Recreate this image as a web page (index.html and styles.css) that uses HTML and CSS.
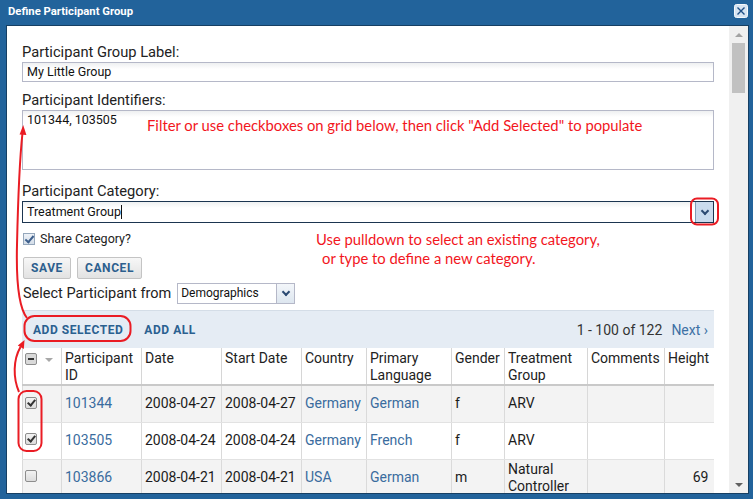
FILE: index.html
```html
<!DOCTYPE html>
<html lang="en">
<head>
    <meta charset="UTF-8">
    <title>Define Participant Group</title>
    <link rel="stylesheet" href="styles.css">
</head>
<body>
    <div class="window">
        <div class="titlebar">
            <span class="title">Define Participant Group</span>
            <svg class="close" width="14" height="14" viewBox="0 0 14 14">
                <rect x="0.5" y="0.5" width="13" height="13" rx="2" fill="#d6e4f2" stroke="#f4f8fc"/>
                <path d="M3.5 3.5 L10.5 10.5 M10.5 3.5 L3.5 10.5" stroke="#1d4f86" stroke-width="1.4"/>
            </svg>
        </div>

        <div class="body">
            <div class="pane">
                <div class="field-label">Participant Group Label:</div>
                <div class="text-input">My Little Group</div>

                <div class="field-label">Participant Identifiers:</div>
                <div class="text-area">101344, 103505</div>

                <div class="field-label">Participant Category:</div>
                <div class="combo focused">
                    <span class="combo-text">Treatment Group<span class="caret"></span></span>
                    <span class="trigger blue"><span class="chevron"></span></span>
                </div>

                <div class="check-row">
                    <span class="ext-check"></span>
                    <span>Share Category?</span>
                </div>

                <div class="buttons">
                    <span class="btn">SAVE</span>
                    <span class="btn">CANCEL</span>
                </div>

                <div class="select-row">
                    <span>Select Participant from</span>
                    <div class="combo small">
                        <span class="combo-text">Demographics</span>
                        <span class="trigger"><span class="chevron"></span></span>
                    </div>
                </div>

                <div class="grid-toolbar">
                    <span class="tool-link">ADD SELECTED</span>
                    <span class="tool-link">ADD ALL</span>
                    <span class="spacer"></span>
                    <span class="paging">1 - 100 of 122</span>
                    <span class="next">Next &rsaquo;</span>
                </div>

                <table class="grid">
                    <colgroup>
                        <col style="width:39px"><col style="width:80px"><col style="width:80px">
                        <col style="width:80px"><col style="width:65px"><col style="width:85px">
                        <col style="width:53px"><col style="width:83px"><col style="width:77px">
                        <col style="width:49px">
                    </colgroup>
                    <thead>
                        <tr>
                            <th class="sel-col"><span class="cb minus"></span><span class="sort"></span></th>
                            <th>Participant ID</th>
                            <th>Date</th>
                            <th>Start Date</th>
                            <th>Country</th>
                            <th>Primary Language</th>
                            <th>Gender</th>
                            <th>Treatment Group</th>
                            <th>Comments</th>
                            <th>Height</th>
                        </tr>
                    </thead>
                    <tbody>
                        <tr class="alt">
                            <td class="sel-col"><span class="cb checked"></span></td>
                            <td><a>101344</a></td>
                            <td>2008-04-27</td>
                            <td>2008-04-27</td>
                            <td><a>Germany</a></td>
                            <td><a>German</a></td>
                            <td>f</td>
                            <td>ARV</td>
                            <td></td>
                            <td class="num"></td>
                        </tr>
                        <tr>
                            <td class="sel-col"><span class="cb checked"></span></td>
                            <td><a>103505</a></td>
                            <td>2008-04-24</td>
                            <td>2008-04-24</td>
                            <td><a>Germany</a></td>
                            <td><a>French</a></td>
                            <td>f</td>
                            <td>ARV</td>
                            <td></td>
                            <td class="num"></td>
                        </tr>
                        <tr class="alt">
                            <td class="sel-col"><span class="cb"></span></td>
                            <td><a>103866</a></td>
                            <td>2008-04-21</td>
                            <td>2008-04-21</td>
                            <td><a>USA</a></td>
                            <td><a>German</a></td>
                            <td>m</td>
                            <td>Natural Controller</td>
                            <td></td>
                            <td class="num">69</td>
                        </tr>
                    </tbody>
                </table>
            </div>

            <div class="scrollbar">
                <span class="sb-arrow"><span class="tri up"></span></span>
                <span class="thumb"></span>
                <span class="spacer"></span>
                <span class="sb-arrow"><span class="tri down"></span></span>
            </div>
        </div>

        <!-- red help callouts drawn over the dialog -->
        <div class="note note-filter">Filter or use checkboxes on grid below, then click "Add Selected" to populate</div>
        <div class="note note-category">
            <span class="line">Use pulldown to select an existing category,</span>
            <span class="line indent">or type to define a new category.</span>
        </div>
        <svg class="annotations" width="753" height="499" viewBox="0 0 753 499">
            <g fill="none" stroke="#ea1c24" stroke-width="2">
                <rect x="691" y="198.5" width="27" height="26" rx="6"/>
                <rect x="24.5" y="316" width="106" height="25" rx="10"/>
                <rect x="18.5" y="391" width="23" height="60" rx="8"/>
                <path d="M27 318 C19 308 16 285 17 245 C18 200 19 165 22.5 133"/>
                <path d="M19 392 C13 378 13 360 20.5 347"/>
            </g>
            <g fill="#ea1c24">
                <path d="M23.2 125 L26.4 135 L19.6 134.4 Z"/>
                <path d="M24.5 340 L23.8 349 L17.8 345.6 Z"/>
            </g>
        </svg>
    </div>
</body>
</html>
```

FILE: styles.css
```css
html, body {
    margin: 0;
    padding: 0;
}

body {
    font-family: Roboto, "Liberation Sans", Arial, sans-serif;
    color: #222;
    width: 753px;
    height: 499px;
    overflow: hidden;
}

.window {
    position: relative;
    width: 753px;
    height: 499px;
    box-sizing: border-box;
    background: #22639b;
    padding: 0 4px 5px 6px;
    display: flex;
    flex-direction: column;
}

.titlebar {
    height: 25px;
    display: flex;
    align-items: center;
    justify-content: space-between;
    padding: 0 1px 3px 2px;
    box-sizing: border-box;
}

.title {
    color: #fff;
    font-weight: bold;
    font-size: 11.3px;
}

.close {
    display: block;
}

.body {
    flex: 1;
    display: flex;
    border: 1px solid #163f63;
    background: #fff;
    min-height: 0;
}

.pane {
    flex: 1;
    padding: 17px 15px 0 15px;
    overflow: hidden;
}

.field-label {
    font-size: 14.7px;
    line-height: 18px;
    margin-bottom: 1px;
    color: #222;
}

.text-input,
.text-area,
.combo {
    box-sizing: border-box;
    border: 1px solid #b5b8c8;
    background: linear-gradient(#eef0f1, #fff 6px);
    font-size: 12.5px;
    color: #111;
}

.text-input {
    height: 20px;
    line-height: 18px;
    padding: 0 4px;
    margin-bottom: 9px;
}

.text-area {
    height: 60px;
    padding: 1px 4px;
    line-height: 15px;
    margin-bottom: 12px;
}

.combo {
    display: flex;
    height: 22px;
}

.combo.focused {
    border-color: #1b3550;
}

.combo-text {
    flex: 1;
    padding: 0 4px;
    line-height: 20px;
    display: flex;
    align-items: center;
}

.caret {
    display: inline-block;
    width: 1px;
    height: 14px;
    background: #111;
}

.trigger {
    width: 17px;
    display: flex;
    align-items: center;
    justify-content: center;
    background: linear-gradient(#f3f6fa, #dde6ef);
    border-left: 1px solid #b5b8c8;
}

.trigger.blue {
    background: #c9dbee;
    border-left: 1px solid #7f9db9;
}

.chevron {
    width: 4px;
    height: 4px;
    border-right: 2px solid #2c4a72;
    border-bottom: 2px solid #2c4a72;
    transform: rotate(45deg);
    margin-top: -3px;
}

.check-row {
    margin-top: 7px;
    display: flex;
    align-items: center;
    gap: 5px;
    font-size: 12.5px;
    line-height: 18px;
    padding-left: 1px;
}

.ext-check {
    position: relative;
    width: 10px;
    height: 10px;
    border: 1px solid #95a7bb;
    background: linear-gradient(#eef2f7, #d3dde8);
}

.ext-check::after {
    content: "";
    position: absolute;
    left: 3px;
    top: 0;
    width: 3px;
    height: 7px;
    border-right: 2px solid #3d5f8c;
    border-bottom: 2px solid #3d5f8c;
    transform: rotate(40deg);
}

.buttons {
    margin-top: 9px;
    display: flex;
    gap: 6px;
    padding-left: 1px;
}

.btn {
    height: 22px;
    box-sizing: border-box;
    padding: 0 7px;
    border: 1px solid #c4c4c4;
    border-radius: 2px;
    background: linear-gradient(#f7f7f7, #e2e2e2);
    color: #2d5f8e;
    font-size: 12px;
    font-weight: bold;
    letter-spacing: 0.6px;
    line-height: 20px;
}

.select-row {
    margin-top: 4px;
    display: flex;
    align-items: center;
    gap: 6px;
    font-size: 14.5px;
    padding-left: 1px;
}

.combo.small {
    width: 118px;
    height: 21px;
    font-size: 12px;
    background: #fff;
}

.combo.small .combo-text {
    line-height: 19px;
    padding: 0 3px;
}

.grid-toolbar {
    margin-top: 6px;
    height: 38px;
    box-sizing: border-box;
    border-top: 1px solid #d4dde7;
    background: #e5ecf4;
    display: flex;
    align-items: center;
    padding: 0 6px 0 11px;
    gap: 21px;
}

.tool-link {
    color: #2a6090;
    font-size: 12px;
    font-weight: bold;
    letter-spacing: 0.55px;
}

.spacer {
    flex: 1;
}

.paging {
    font-size: 14px;
    color: #333;
}

.next {
    font-size: 14px;
    color: #3d70a4;
    margin-left: -12px;
}

.grid {
    border-collapse: collapse;
    table-layout: fixed;
    width: 691px;
    font-size: 14px;
}

.grid th {
    font-weight: normal;
    text-align: left;
    vertical-align: top;
    color: #222;
    line-height: 17px;
    height: 37px;
    padding: 2px 3px 0;
    box-sizing: border-box;
    border-left: 1px solid #d6d6d6;
    border-bottom: 2px solid #c9c9c9;
    background: #fff;
}

.grid td {
    height: 37px;
    padding: 1px 3px;
    box-sizing: border-box;
    line-height: 17px;
    border-left: 1px solid #dadada;
    border-bottom: 1px solid #e2e2e2;
    vertical-align: middle;
    color: #1c1c1c;
}

.grid tr.alt td {
    background: #f3f3f3;
}

.grid a {
    color: #3a6c9e;
}

.grid .num {
    text-align: right;
    padding-right: 5px;
}

.grid .sel-col {
    padding-left: 2px;
}

.grid th.sel-col {
    padding-top: 5px;
}

.cb {
    position: relative;
    display: inline-block;
    vertical-align: top;
    width: 10px;
    height: 10px;
    border: 1px solid #8d8d8d;
    border-radius: 2px;
    background: linear-gradient(#f2f2f2, #dcdcdc);
}

.grid td .cb {
    vertical-align: middle;
    margin-top: -4px;
}

.cb.checked::after {
    content: "";
    position: absolute;
    left: 3px;
    top: 0;
    width: 3px;
    height: 6px;
    border-right: 2px solid #333;
    border-bottom: 2px solid #333;
    transform: rotate(40deg);
}

.cb.minus {
    background: #d9d9d9;
}

.cb.minus::after {
    content: "";
    position: absolute;
    left: 2px;
    top: 4px;
    width: 6px;
    height: 2px;
    background: #333;
}

.sort {
    display: inline-block;
    vertical-align: top;
    margin: 5px 0 0 8px;
    width: 0;
    height: 0;
    border-left: 4px solid transparent;
    border-right: 4px solid transparent;
    border-top: 4px solid #a8a8a8;
}

.scrollbar {
    width: 19px;
    background: #f0f0f0;
    display: flex;
    flex-direction: column;
    align-items: center;
}

.sb-arrow {
    height: 17px;
    display: flex;
    align-items: center;
    justify-content: center;
}

.tri {
    width: 0;
    height: 0;
    border-left: 4px solid transparent;
    border-right: 4px solid transparent;
}

.tri.up {
    border-bottom: 4px solid #a3a3a3;
}

.tri.down {
    border-top: 4px solid #606060;
}

.thumb {
    width: 13px;
    height: 50px;
    background: #c1c1c1;
}

.note {
    position: absolute;
    color: #f2161d;
    font-family: Lato, "Open Sans", sans-serif;
    font-size: 14.8px;
    line-height: 19px;
}

.note-filter {
    left: 147px;
    top: 116px;
    white-space: nowrap;
}

.note-category {
    left: 316px;
    top: 230px;
}

.note .line {
    display: block;
    white-space: nowrap;
}

.note .indent {
    margin-left: 6px;
}

.annotations {
    position: absolute;
    left: 0;
    top: 0;
    pointer-events: none;
}
```
